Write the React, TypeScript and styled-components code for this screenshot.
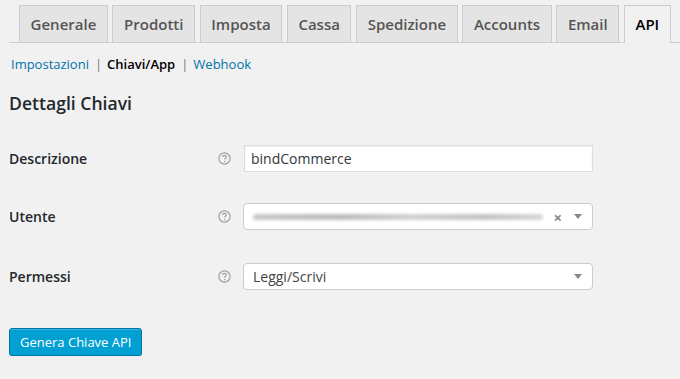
import React from "react";
import styled, { createGlobalStyle } from "styled-components";

const GlobalStyle = createGlobalStyle`
  body {
    margin: 0;
    background: #f1f1f1;
    font-family: "Open Sans", "Liberation Sans", sans-serif;
    color: #444;
  }
`;

const Wrap = styled.div`
  margin-left: 9px;
  padding-top: 5px;
`;

const NavTabs = styled.div`
  display: flex;
  padding-left: 10px;
  border-bottom: 1px solid #ccc;
  height: 37px;
`;

const Tab = styled.a<{ $active?: boolean }>`
  box-sizing: border-box;
  height: ${(p) => (p.$active ? "38px" : "37px")};
  margin-left: 4.6px;
  padding: 0 10.6px;
  border: 1px solid #ccc;
  border-bottom: none;
  background: ${(p) => (p.$active ? "#f1f1f1" : "#e4e4e4")};
  color: ${(p) => (p.$active ? "#000" : "#555")};
  font-size: 15px;
  font-weight: 600;
  line-height: 36px;
  text-decoration: none;
  white-space: nowrap;
  &:first-child {
    margin-left: 0;
  }
`;

const SubNav = styled.div`
  margin-top: 11px;
  padding-left: 2px;
  font-size: 13px;
  line-height: 20px;
  color: #777;
`;

const SubLink = styled.a<{ $current?: boolean }>`
  color: ${(p) => (p.$current ? "#000" : "#0073aa")};
  font-weight: ${(p) => (p.$current ? 600 : 400)};
  text-decoration: none;
`;

const Sep = styled.span`
  margin: 0 5px 0 6px;
`;

const Heading = styled.h2`
  margin: 17px 0 0;
  font-size: 17.6px;
  line-height: 24px;
  font-weight: 600;
  color: #23282d;
`;

const Row = styled.div<{ $top: number }>`
  display: grid;
  grid-template-columns: 209px 25px 350px;
  align-items: center;
  height: 27px;
  margin-top: ${(p) => p.$top}px;
`;

const Label = styled.label`
  font-size: 14px;
  font-weight: 600;
  color: #23282d;
`;

const Help = styled.span`
  display: flex;
  align-items: center;
`;

const TextInput = styled.div`
  box-sizing: border-box;
  height: 27px;
  margin-left: 1px;
  padding: 0 6px;
  background: #fff;
  border: 1px solid #ddd;
  box-shadow: inset 0 1px 2px rgba(0, 0, 0, 0.07);
  font-size: 14px;
  line-height: 25px;
  color: #32373c;
`;

const SelectBox = styled.div`
  box-sizing: border-box;
  display: flex;
  align-items: center;
  height: 27px;
  padding: 0 10px 0 9px;
  background: #fff;
  border: 1px solid #ccc;
  border-radius: 4px;
  font-size: 14px;
  color: #444;
`;

const SelectText = styled.span`
  flex: 1;
`;

const Blur = styled.div`
  flex: 1;
  height: 6px;
  margin-right: 10px;
  border-radius: 3px;
  background: linear-gradient(90deg, #c9c9c9, #bdbdbd 30%, #d2d2d2 55%, #c4c4c4 80%, #d8d8d8);
  filter: blur(1.4px);
`;

const Clear = styled.span`
  font-size: 15px;
  font-weight: 700;
  color: #888;
  margin-right: 12px;
`;

const Arrow = styled.span`
  width: 0;
  height: 0;
  border-left: 4px solid transparent;
  border-right: 4px solid transparent;
  border-top: 5px solid #888;
`;

const Button = styled.button`
  margin-top: 38px;
  height: 28px;
  padding: 0 10px;
  background: #00a0d2;
  border: 1px solid #0073aa;
  border-radius: 3px;
  box-shadow: inset 0 1px 0 rgba(120, 200, 230, 0.5), 0 1px 0 rgba(0, 0, 0, 0.15);
  color: #fff;
  font-family: "Open Sans", "Liberation Sans", sans-serif;
  font-size: 13px;
  line-height: 26px;
`;

const HelpIcon = () => (
  <svg width="13" height="13" viewBox="0 0 13 13">
    <circle cx="6.5" cy="6.5" r="5.6" fill="none" stroke="#a0a0a0" strokeWidth="1.2" />
    <path
      d="M4.7 5.1c0-1 .8-1.7 1.8-1.7s1.8.6 1.8 1.5c0 1.2-1.6 1.2-1.6 2.6"
      fill="none"
      stroke="#a0a0a0"
      strokeWidth="1.2"
    />
    <circle cx="6.7" cy="9.4" r="0.75" fill="#a0a0a0" />
  </svg>
);

const tabs = ["Generale", "Prodotti", "Imposta", "Cassa", "Spedizione", "Accounts", "Email", "API"];

export default function App() {
  return (
    <>
      <GlobalStyle />
      <Wrap>
        <NavTabs>
          {tabs.map((t) => (
            <Tab key={t} $active={t === "API"}>
              {t}
            </Tab>
          ))}
        </NavTabs>
        <SubNav>
          <SubLink>Impostazioni</SubLink>
          <Sep>|</Sep>
          <SubLink $current>Chiavi/App</SubLink>
          <Sep>|</Sep>
          <SubLink>Webhook</SubLink>
        </SubNav>
        <Heading>Dettagli Chiavi</Heading>
        <Row $top={30}>
          <Label>Descrizione</Label>
          <Help>
            <HelpIcon />
          </Help>
          <TextInput>bindCommerce</TextInput>
        </Row>
        <Row $top={31}>
          <Label>Utente</Label>
          <Help>
            <HelpIcon />
          </Help>
          <SelectBox>
            <Blur />
            <Clear>×</Clear>
            <Arrow />
          </SelectBox>
        </Row>
        <Row $top={33}>
          <Label>Permessi</Label>
          <Help>
            <HelpIcon />
          </Help>
          <SelectBox>
            <SelectText>Leggi/Scrivi</SelectText>
            <Arrow />
          </SelectBox>
        </Row>
        <Button>Genera Chiave API</Button>
      </Wrap>
    </>
  );
}
